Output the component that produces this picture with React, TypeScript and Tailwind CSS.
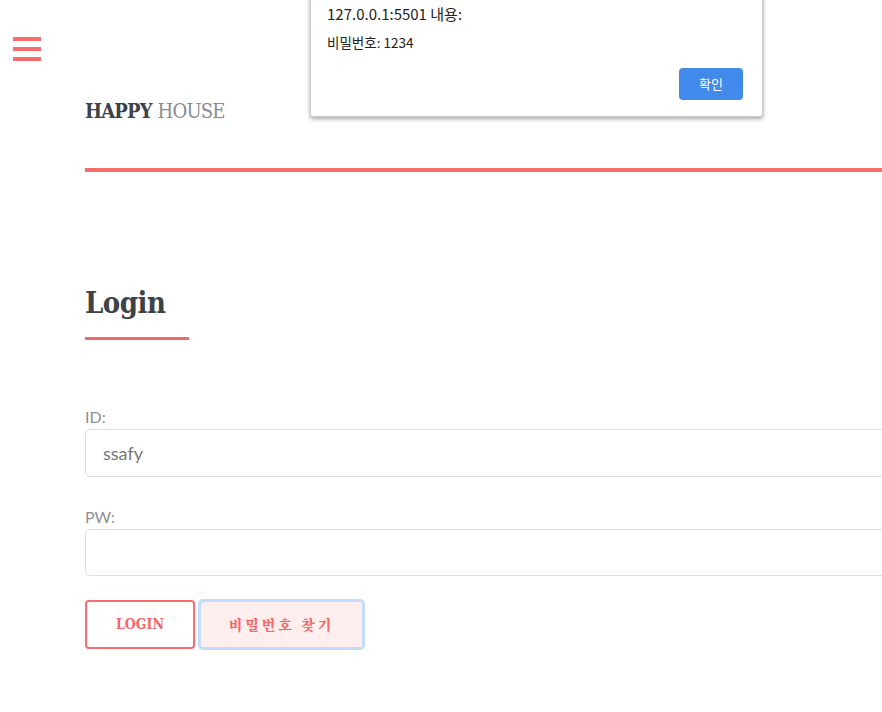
export default function App() {
  return (
    <div className="relative w-[882px] h-[712px] overflow-hidden bg-white" style={{ fontFamily: "Lato, 'Noto Sans CJK KR', sans-serif" }}>
      {/* hamburger */}
      <div className="absolute left-[13px] top-[37px] flex flex-col gap-[6px]">
        <div className="w-[28px] h-[4px] bg-[#f76c6c]" />
        <div className="w-[28px] h-[4px] bg-[#f76c6c]" />
        <div className="w-[28px] h-[4px] bg-[#f76c6c]" />
      </div>

      <div className="pl-[85px] w-[1100px]">
        <header className="pt-[98px]">
          <div className="text-[20px] leading-[26px] text-[#3d4247]" style={{ fontFamily: "'DejaVu Serif Condensed', 'DejaVu Serif', serif" }}>
            <span className="font-bold tracking-[-0.8px]">HAPPY</span>{" "}
            <span className="text-[#858a93] tracking-[-0.8px]">HOUSE</span>
          </div>
          <div className="mt-[44px] h-[4px] bg-[#f76c6c]" />
        </header>

        <section className="pt-[113px]">
          <h1 className="text-[29px] leading-[36px] font-bold text-[#3d4247] tracking-[-0.5px]" style={{ fontFamily: "'DejaVu Serif Condensed', 'DejaVu Serif', serif" }}>
            Login
          </h1>
          <div className="mt-[16px] w-[104px] h-[3px] bg-[#f06868]" />

          <form className="pt-[67px] flex flex-col">
            <label className="text-[16px] leading-[20px] text-[#8f8f8f]">ID:</label>
            <div className="mt-[2px] h-[48px] border border-[#dedede] rounded-[5px] flex items-center pl-[17px] text-[18px] text-[#777]">
              ssafy
            </div>
            <label className="mt-[30px] text-[16px] leading-[20px] text-[#8f8f8f]">PW:</label>
            <div className="mt-[2px] h-[47px] border border-[#dedede] rounded-[5px]" />

            <div className="mt-[23px] flex items-start gap-[3px]">
              <button
                type="button"
                className="w-[110px] h-[49px] mt-[1px] border-2 border-[#f76c6c] rounded-[4px] bg-white text-[#f06868] font-bold text-[14px]"
                style={{ fontFamily: "'DejaVu Serif Condensed', 'DejaVu Serif', 'Noto Sans CJK KR', serif" }}
              >
                LOGIN
              </button>
              <button
                type="button"
                className="w-[167px] h-[51px] border-[3px] border-[#c2dcfb] rounded-[5px] bg-[#ffeeee] text-[#f06868] font-black text-[14px] tracking-[3px]"
                style={{ fontFamily: "'Noto Serif CJK KR', 'Noto Sans CJK KR', serif" }}
              >
                비밀번호 찾기
              </button>
            </div>
          </form>
        </section>
      </div>

      {/* alert dialog */}
      <div
        className="absolute left-[310px] top-[-10px] w-[453px] h-[127px] bg-white border border-[#c9c9c9] rounded-b-[3px] shadow-[0_2px_4px_rgba(0,0,0,0.35)]"
        style={{ fontFamily: "'Noto Sans CJK KR', 'Noto Sans', sans-serif" }}
      >
        <div className="pl-[16px] pt-[13px] text-[15px] leading-[20px] text-[#222]">127.0.0.1:5501 내용:</div>
        <div className="pl-[16px] mt-[9px] text-[13.5px] leading-[18px] text-[#222]">비밀번호: 1234</div>
        <div className="flex justify-end pr-[19px] mt-[17px]">
          <div className="w-[64px] h-[32px] rounded-[4px] bg-[#4289ec] text-white text-[13px] flex items-center justify-center">
            확인
          </div>
        </div>
      </div>
    </div>
  );
}
